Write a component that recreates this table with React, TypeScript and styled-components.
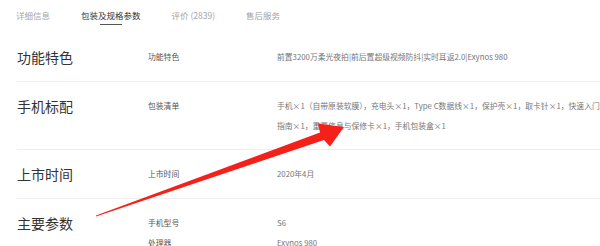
import React from 'react'
import styled, { createGlobalStyle } from 'styled-components'

const GlobalStyle = createGlobalStyle`
  html, body {
    margin: 0;
    padding: 0;
    background: #fff;
  }
  body {
    font-family: "Noto Sans CJK SC", "Noto Sans", sans-serif;
  }
`

const Page = styled.div`
  position: relative;
  width: 600px;
  height: 246px;
  overflow: hidden;
  background: #fff;
`

const TabBar = styled.ul`
  display: flex;
  gap: 31px;
  margin: 0;
  padding: 0 0 0 16px;
  height: 33px;
  list-style: none;
`

const Tab = styled.li<{ $active?: boolean }>`
  position: relative;
  padding-top: 9px;
  font-size: 8.5px;
  line-height: 12px;
  color: ${p => (p.$active ? '#333' : '#a5a5a5')};

  &::after {
    content: '';
    display: ${p => (p.$active ? 'block' : 'none')};
    position: absolute;
    left: 50%;
    top: 24px;
    width: 22px;
    height: 1px;
    margin-left: -11px;
    background: #555;
  }
`

const Sections = styled.div`
  padding-left: 17px;
`

const Section = styled.section<{ $first?: boolean }>`
  display: grid;
  grid-template-columns: 131px 1fr;
  padding: 14px 0;
  border-top: ${p => (p.$first ? 'none' : '1px solid #efefef')};
`

const SectionTitle = styled.h3`
  margin: 0;
  font-size: 14px;
  font-weight: 400;
  line-height: 20px;
  color: #333;
`

const Pairs = styled.dl`
  margin: 0;
`

const Pair = styled.div`
  display: grid;
  grid-template-columns: 129px 329px;
  font-size: 7.8px;
  line-height: 19.5px;
`

const Label = styled.dt`
  color: #555;
`

const Value = styled.dd`
  margin: 0;
  color: #777;
`

const Arrow = styled.svg`
  position: absolute;
  left: 0;
  top: 0;
  pointer-events: none;
`

const tabs = ['详细信息', '包装及规格参数', '评价 (2839)', '售后服务']

const sections = [
  {
    title: '功能特色',
    pairs: [['功能特色', '前置3200万柔光夜拍|前后置超级视频防抖|实时耳返2.0|Exynos 980']],
  },
  {
    title: '手机标配',
    pairs: [['包装清单', '手机×1（自带原装软膜），充电头×1，Type C数据线×1，保护壳×1，取卡针×1，快速入门指南×1，重要信息与保修卡×1，手机包装盒×1']],
  },
  {
    title: '上市时间',
    pairs: [['上市时间', '2020年4月']],
  },
  {
    title: '主要参数',
    pairs: [
      ['手机型号', 'S6'],
      ['处理器', 'Exynos 980'],
    ],
  },
]

export default function App() {
  return (
    <Page>
      <GlobalStyle />
      <TabBar>
        {tabs.map((t, i) => (
          <Tab key={i} $active={i === 1}>{t}</Tab>
        ))}
      </TabBar>
      <Sections>
        {sections.map((s, i) => (
          <Section key={i} $first={i === 0}>
            <SectionTitle>{s.title}</SectionTitle>
            <Pairs>
              {s.pairs.map(([k, v], j) => (
                <Pair key={j}>
                  <Label>{k}</Label>
                  <Value>{v}</Value>
                </Pair>
              ))}
            </Pairs>
          </Section>
        ))}
      </Sections>
      <Arrow width="600" height="246" viewBox="0 0 600 246">
        <polygon
          points="96,215.5 320,132.5 318,123.5 344,127 330,146.5 324,140 96,216.5"
          fill="#f5201a"
        />
      </Arrow>
    </Page>
  )
}
